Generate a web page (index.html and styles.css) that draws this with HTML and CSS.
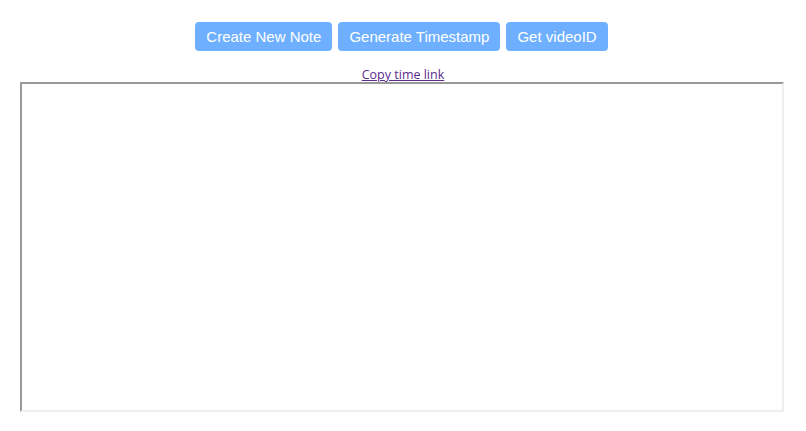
FILE: index.html
```html
<!DOCTYPE html>
<html>
<head>
<meta charset="utf-8">
<link rel="stylesheet" href="styles.css">
</head>
<body>
<div class="page">
  <div class="toolbar">
    <button class="btn">Create New Note</button>
    <button class="btn">Generate Timestamp</button>
    <button class="btn">Get videoID</button>
  </div>
  <div class="link-row"><a href="#" class="time-link">Copy time link</a></div>
  <textarea class="notes"></textarea>
</div>
</body>
</html>
```
FILE: styles.css
```css
html, body {
  margin: 0;
  padding: 0;
  background: #fff;
}
.page {
  width: 806px;
  padding-top: 22px;
}
.toolbar {
  display: flex;
  justify-content: center;
  gap: 6px;
  padding-right: 3px;
}
.btn {
  height: 29px;
  padding: 0 11px;
  border: none;
  border-radius: 4px;
  background: #6eb0ff;
  color: #fff;
  font-family: "Liberation Sans", Arial, sans-serif;
  font-size: 15px;
  line-height: 29px;
}
.link-row {
  margin-top: 16px;
  text-align: center;
  height: 15px;
  font-family: "Open Sans", "Noto Sans", sans-serif;
  font-size: 12.5px;
  line-height: 15px;
}
.time-link {
  color: #5b2d91;
  text-decoration: underline;
}
.notes {
  display: block;
  box-sizing: border-box;
  width: 764px;
  height: 330px;
  margin: 0 0 0 20px;
  border-width: 2px;
  border-style: solid;
  border-top-color: #999;
  border-left-color: #999;
  border-right-color: #eee;
  border-bottom-color: #eee;
  resize: none;
  background: #fff;
}
```
